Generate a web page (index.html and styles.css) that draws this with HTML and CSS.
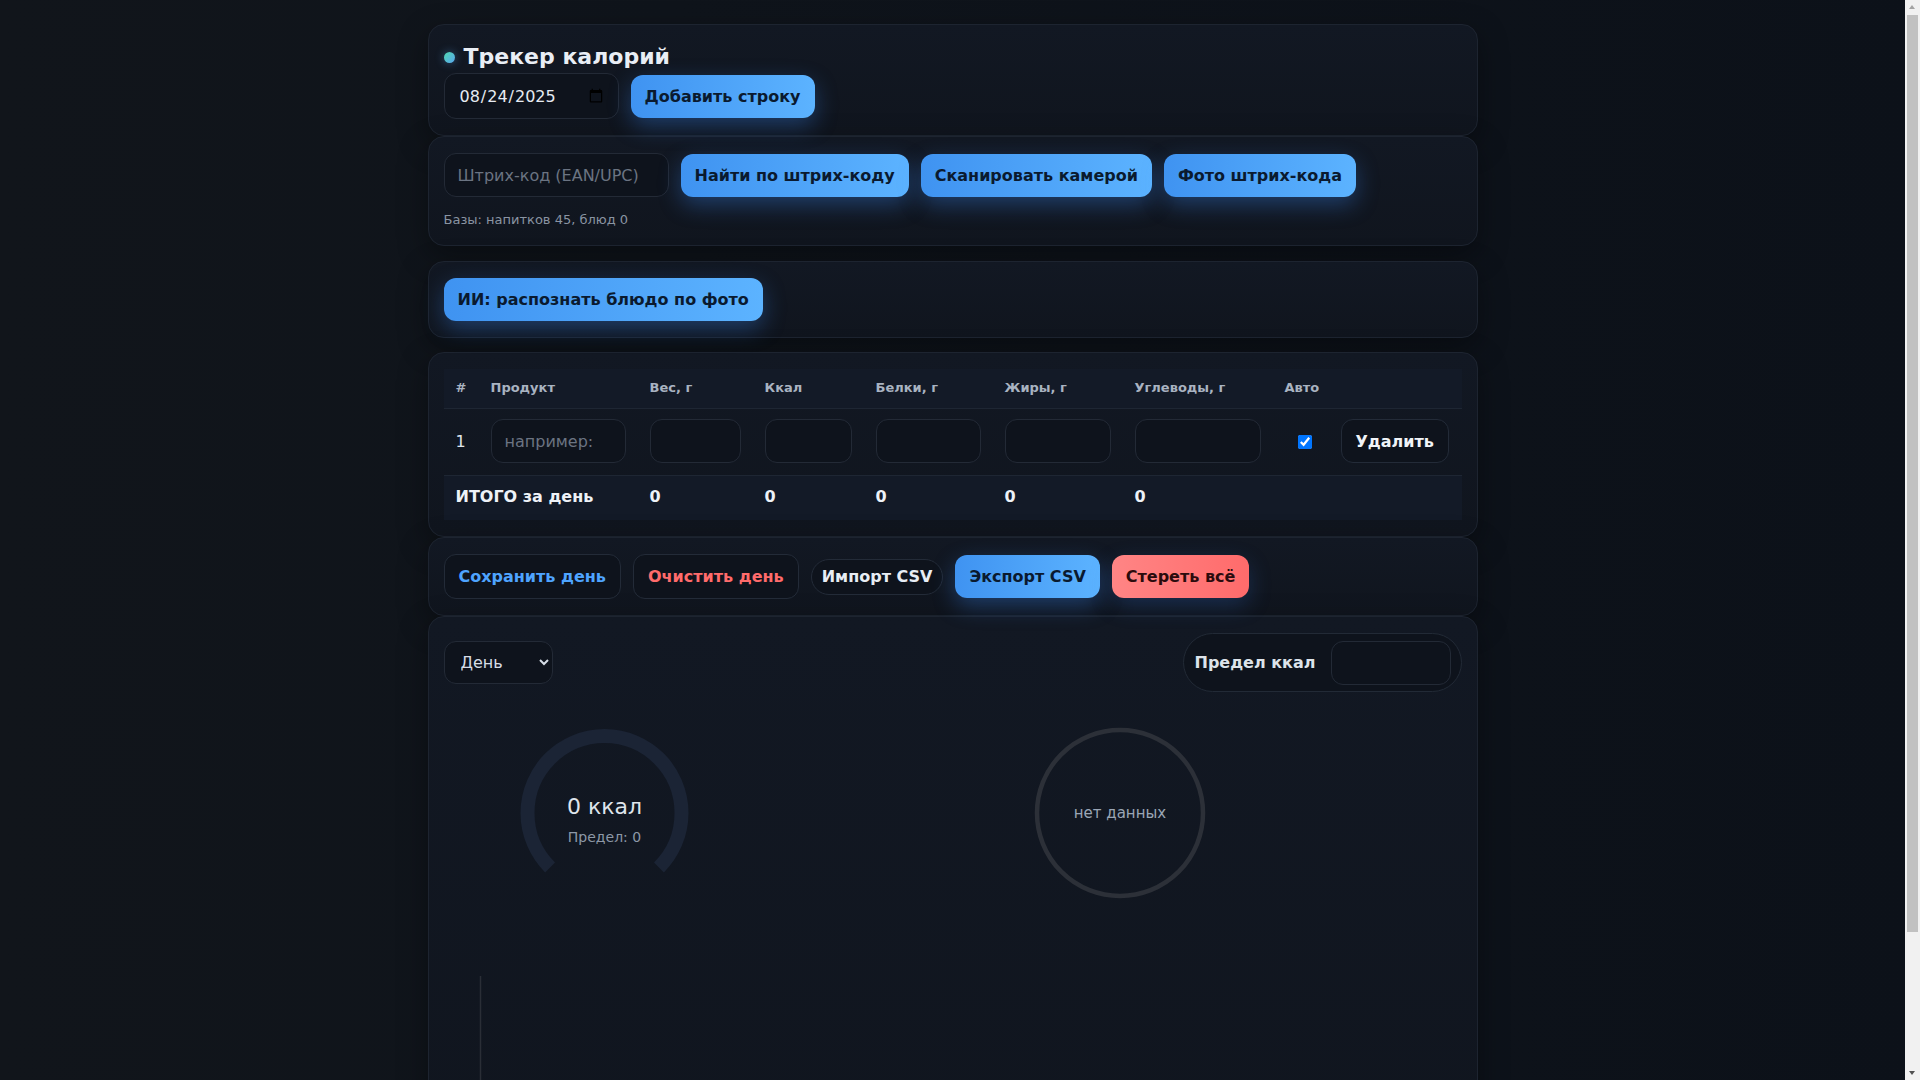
FILE: index.html
```html
<!DOCTYPE html>
<html lang="ru">
<head>
<meta charset="utf-8">
<title>Трекер калорий</title>
<link rel="stylesheet" href="styles.css">
</head>
<body>
<div class="app">
  <section class="card">
    <h1 class="title"><span class="dot"></span>Трекер калорий</h1>
    <div class="row">
      <input type="date" class="field date" value="2025-08-24">
      <button class="btn primary">Добавить строку</button>
    </div>
  </section>

  <section class="card">
    <div class="row">
      <input type="text" class="field barcode" placeholder="Штрих-код (EAN/UPC)">
      <button class="btn primary">Найти по штрих-коду</button>
      <button class="btn primary">Сканировать камерой</button>
      <button class="btn primary">Фото штрих-кода</button>
    </div>
    <div class="muted">Базы: напитков 45, блюд 0</div>
  </section>

  <section class="card gap15">
    <button class="btn primary">ИИ: распознать блюдо по фото</button>
  </section>

  <section class="card gap14">
    <table class="grid">
      <colgroup>
        <col class="c-num"><col class="c-prod"><col class="c-w"><col class="c-kcal"><col class="c-p"><col class="c-f"><col class="c-c"><col class="c-auto"><col>
      </colgroup>
      <thead>
        <tr><th>#</th><th>Продукт</th><th>Вес, г</th><th>Ккал</th><th>Белки, г</th><th>Жиры, г</th><th>Углеводы, г</th><th>Авто</th><th></th></tr>
      </thead>
      <tbody>
        <tr>
          <td class="num">1</td>
          <td><input type="text" class="field cell" placeholder="например:"></td>
          <td><input type="number" class="field cell"></td>
          <td><input type="number" class="field cell"></td>
          <td><input type="number" class="field cell"></td>
          <td><input type="number" class="field cell"></td>
          <td><input type="number" class="field cell"></td>
          <td><input type="checkbox" class="chk" checked></td>
          <td><button class="btn ghost del">Удалить</button></td>
        </tr>
      </tbody>
      <tfoot>
        <tr><td colspan="2">ИТОГО за день</td><td>0</td><td>0</td><td>0</td><td>0</td><td>0</td><td></td><td></td></tr>
      </tfoot>
    </table>
  </section>

  <section class="card">
    <div class="row">
      <button class="btn ghost blue">Сохранить день</button>
      <button class="btn ghost red">Очистить день</button>
      <button class="btn ghost small">Импорт CSV</button>
      <button class="btn primary">Экспорт CSV</button>
      <button class="btn danger">Стереть всё</button>
    </div>
  </section>

  <section class="card">
    <div class="controls">
      <select class="field select"><option>День</option><option>Неделя</option><option>Месяц</option></select>
      <label class="limit"><span class="limit-label">Предел ккал</span><input type="number" class="field limit-input"></label>
    </div>
    <div class="charts">
      <div class="gauge">
        <svg width="323" height="210" viewBox="0 0 323 210">
          <path d="M106.05 159.45 A77 77 0 1 1 214.95 159.45" fill="none" stroke="#1b2435" stroke-width="14"/>
          <text x="160.5" y="106" text-anchor="middle" class="g-main">0 ккал</text>
          <text x="160.5" y="134" text-anchor="middle" class="g-sub">Предел: 0</text>
        </svg>
      </div>
      <div class="pie">
        <svg width="210" height="210" viewBox="0 0 210 210">
          <circle cx="105" cy="105" r="83" fill="none" stroke="#2c3038" stroke-width="4.5"/>
          <text x="105" y="110" text-anchor="middle" class="p-text">нет данных</text>
        </svg>
      </div>
    </div>
    <div class="bars">
      <svg width="1018" height="260" viewBox="0 0 1018 260">
        <line x1="36.5" y1="42" x2="36.5" y2="240" stroke="#2a2e36" stroke-width="1.5"/>
        <line x1="36.5" y1="240" x2="1000" y2="240" stroke="#2a2e36" stroke-width="1.5"/>
      </svg>
    </div>
  </section>
</div>

<div class="scrollbar" aria-hidden="true">
  <span class="sb-up"></span>
  <span class="sb-thumb"></span>
  <span class="sb-down"></span>
</div>
</body>
</html>
```

FILE: styles.css
```css
* { box-sizing: border-box; }

html, body {
  margin: 0;
}

body {
  background: linear-gradient(90deg, #11151b 0%, #0f141b 35%, #0c1119 100%);
  background-color: #0c1118;
  font-family: "DejaVu Sans", "Noto Sans", sans-serif;
  color: #e6ebf2;
  font-size: 16px;
  padding-right: 15px;
}

.app {
  max-width: 1050px;
  margin: 0 auto;
  padding: 24px 0 24px;
}

.card {
  background: linear-gradient(180deg, #121823 0%, #10151e 100%);
  border: 1px solid #1d2430;
  border-radius: 16px;
  padding: 16px 15px;
  box-shadow: 0 10px 30px rgba(0, 0, 0, 0.35);
}

.gap15 { margin-top: 15px; }
.gap14 { margin-top: 14px; }

.title {
  margin: 1px 0 1px;
  display: flex;
  align-items: center;
  gap: 9px;
  font-size: 22px;
  line-height: 30px;
  font-weight: 700;
  color: #e9eef5;
}

.dot {
  width: 11px;
  height: 11px;
  border-radius: 50%;
  background: linear-gradient(135deg, #4fd8b0 0%, #5aa6f0 100%);
  box-shadow: 0 0 10px rgba(90, 166, 240, 0.45);
}

.row {
  display: flex;
  align-items: center;
  gap: 12px;
}

.field {
  background: #0e131c;
  border: 1px solid #232a36;
  border-radius: 12px;
  color: #e6ebf2;
  font-family: "DejaVu Sans", sans-serif;
  font-size: 16px;
  height: 44px;
  padding: 0 13px;
  outline: none;
}

.field::placeholder { color: #6b7482; }

.date {
  width: 175px;
  height: 46px;
  padding: 0 12px 0 14px;
}

.barcode { width: 225px; }

.btn {
  height: 43px;
  padding: 0 14px;
  border: 0;
  border-radius: 12px;
  font-family: "DejaVu Sans", sans-serif;
  font-size: 16px;
  font-weight: 700;
  cursor: pointer;
  white-space: nowrap;
}

.btn.primary {
  background: linear-gradient(90deg, #3f93f1 0%, #5cb3ff 100%);
  color: #0a1a2f;
  box-shadow: 0 8px 22px rgba(56, 136, 240, 0.35);
}

.btn.danger {
  background: linear-gradient(90deg, #ff8585 0%, #ff6b6b 100%);
  color: #2b0b0d;
  box-shadow: 0 8px 22px rgba(56, 120, 220, 0.25);
}

.btn.ghost {
  height: 45px;
  background: #0e131c;
  border: 1px solid #232b38;
  color: #e8edf4;
}

.btn.ghost.blue { color: #4ea4ff; }
.btn.ghost.red { color: #ff6b6b; }

.btn.ghost.small {
  height: 36px;
  padding: 0 10px;
  border-radius: 18px;
}

.btn.ghost.del {
  height: 44px;
  padding: 0 14px;
  color: #f1f4f8;
}

.muted {
  margin-top: 14px;
  font-size: 13px;
  line-height: 18px;
  color: #8a94a2;
}

/* table */
.grid {
  width: 100%;
  border-collapse: collapse;
  table-layout: fixed;
}

.c-num { width: 35px; }
.c-prod { width: 159px; }
.c-w { width: 115px; }
.c-kcal { width: 111px; }
.c-p { width: 129px; }
.c-f { width: 130px; }
.c-c { width: 150px; }
.c-auto { width: 56px; }

.grid th {
  background: #131a27;
  color: #a9b3c1;
  font-size: 13px;
  font-weight: 700;
  line-height: 15px;
  text-align: left;
  padding: 11px 12px 13px;
  border-bottom: 1px solid #1e2633;
}

.grid tbody td {
  padding: 10px 12px 12px;
  border-bottom: 1px solid #1e2633;
  vertical-align: middle;
}

.grid td.num {
  font-size: 16px;
  color: #dfe5ec;
}

.field.cell {
  width: 100%;
}

.chk {
  margin: 0 0 0 13px;
  width: 14px;
  height: 14px;
  vertical-align: middle;
}

.grid tfoot td {
  background: #131a27;
  font-size: 16px;
  font-weight: 700;
  line-height: 18px;
  padding: 12px 12px 14px;
  color: #eef2f7;
}

/* charts card */
.controls {
  display: flex;
  align-items: center;
  justify-content: space-between;
}

.select {
  width: 109px;
  height: 43px;
  padding: 0 10px 0 12px;
  color: #d6dde6;
}

.limit {
  display: flex;
  align-items: center;
  gap: 15px;
  padding: 6.5px 10px 6.5px 11px;
  border: 1px solid #222a36;
  border-radius: 30px;
  background: #0e131c;
}

.limit-label {
  font-size: 16px;
  font-weight: 700;
  color: #dde3ea;
}

.limit-input {
  width: 120px;
  height: 44px;
}

.charts {
  display: flex;
  gap: 12px;
  margin-top: 16px;
}

.gauge {
  flex: 0 0 323px;
  height: 210px;
}

.gauge svg, .pie svg, .bars svg { display: block; }

.g-main {
  font-family: "DejaVu Sans", sans-serif;
  font-size: 22px;
  fill: #dfe5ec;
}

.g-sub {
  font-family: "DejaVu Sans", sans-serif;
  font-size: 14px;
  fill: #8d98a7;
}

.pie {
  flex: 1;
  height: 210px;
  display: flex;
  justify-content: center;
}

.p-text {
  font-family: "DejaVu Sans", sans-serif;
  font-size: 15px;
  fill: #9aa6b6;
}

.bars {
  margin-top: 16px;
  height: 260px;
}

/* browser scrollbar as seen in the screenshot */
.scrollbar {
  position: fixed;
  top: 0;
  right: 0;
  width: 15px;
  height: 100vh;
  background: #f1f1f1;
}

.sb-thumb {
  position: absolute;
  top: 15px;
  left: 2px;
  right: 2px;
  height: 917px;
  background: #c1c1c1;
}

.sb-up, .sb-down {
  position: absolute;
  left: 4px;
  width: 0;
  height: 0;
  border-left: 3.5px solid transparent;
  border-right: 3.5px solid transparent;
}

.sb-up {
  top: 5px;
  border-bottom: 4px solid #a3a3a3;
}

.sb-down {
  bottom: 5px;
  border-top: 4px solid #505050;
}
```
